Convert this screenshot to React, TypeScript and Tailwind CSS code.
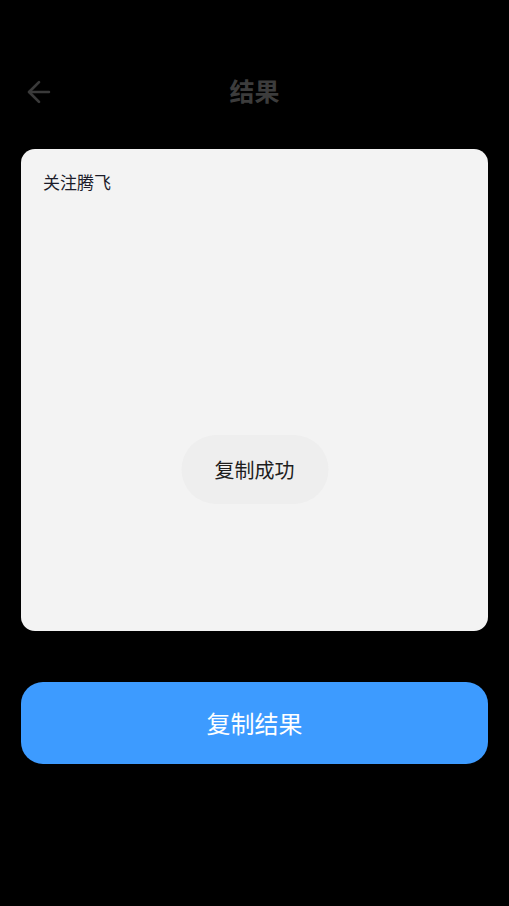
import { ArrowLeft } from 'lucide-react';

const font = { fontFamily: '"Noto Sans CJK SC", "Noto Sans", sans-serif' };

export default function App() {
  return (
    <div className="relative min-h-[906px] w-full bg-black" style={font}>
      <div className="flex h-[184px] flex-col">
        <div className="relative mt-[69px] flex h-[44px] items-center justify-center">
          <button className="absolute left-[22px] top-[6px] text-[#3a3a3a]">
            <ArrowLeft className="h-[34px] w-[34px]" strokeWidth={1.9} />
          </button>
          <h1 className="text-[25px] font-bold text-[#3c3c3c]">结果</h1>
        </div>
      </div>

      <div className="-mt-[35px] px-[21px]">
        <div className="h-[482px] rounded-[14px] bg-[#f3f3f3] px-[22px] pt-[20px]">
          <p className="text-[17px] leading-[25px] text-[#1c1c2a]">关注腾飞</p>
        </div>

        <button className="mt-[51px] flex h-[82px] w-full items-center justify-center rounded-[22px] bg-[#3d9bff] text-[24px] text-white">
          复制结果
        </button>
      </div>

      <div className="absolute left-1/2 top-[435px] flex h-[69px] w-[147px] -translate-x-1/2 items-center justify-center rounded-full bg-[#eeeeee] text-[20px] text-[#1e1e1e]">
        复制成功
      </div>
    </div>
  );
}
